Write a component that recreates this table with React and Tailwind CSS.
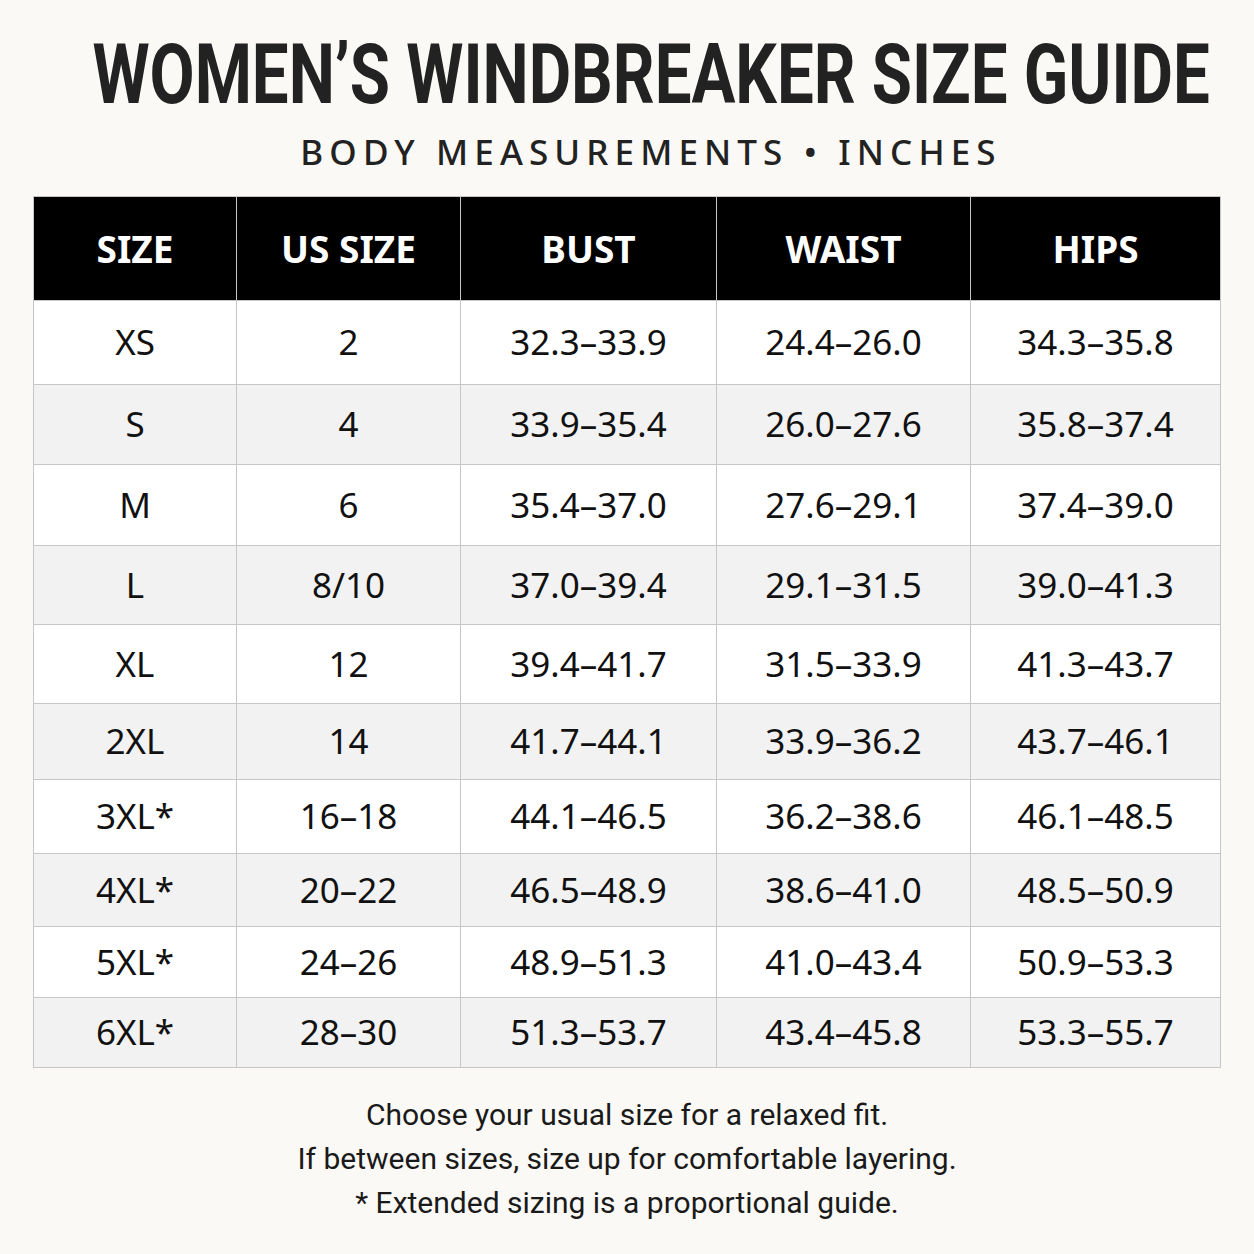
import React from "react";

const rows = [
  ["XS", "2", "32.3–33.9", "24.4–26.0", "34.3–35.8", "h-[84px]"],
  ["S", "4", "33.9–35.4", "26.0–27.6", "35.8–37.4", "h-[80px]"],
  ["M", "6", "35.4–37.0", "27.6–29.1", "37.4–39.0", "h-[81px]"],
  ["L", "8/10", "37.0–39.4", "29.1–31.5", "39.0–41.3", "h-[79px]"],
  ["XL", "12", "39.4–41.7", "31.5–33.9", "41.3–43.7", "h-[79px]"],
  ["2XL", "14", "41.7–44.1", "33.9–36.2", "43.7–46.1", "h-[76px]"],
  ["3XL*", "16–18", "44.1–46.5", "36.2–38.6", "46.1–48.5", "h-[74px]"],
  ["4XL*", "20–22", "46.5–48.9", "38.6–41.0", "48.5–50.9", "h-[73px]"],
  ["5XL*", "24–26", "48.9–51.3", "41.0–43.4", "50.9–53.3", "h-[71px]"],
  ["6XL*", "28–30", "51.3–53.7", "43.4–45.8", "53.3–55.7", "h-[70px]"],
];

const headers = ["SIZE", "US SIZE", "BUST", "WAIST", "HIPS"];

function App() {
  return (
    <div className="w-full min-h-screen bg-[#faf9f5] text-[#111] pb-10 overflow-hidden">
      <div className="pl-[48px] pt-[33px] text-center">
        <div className="flex justify-center">
          <h1 className="shrink-0 scale-x-[0.778] whitespace-nowrap font-['Roboto',sans-serif] font-bold text-[84px] leading-none text-[#222]">
            WOMEN’S WINDBREAKER SIZE GUIDE
          </h1>
        </div>
        <p className="mt-[17px] font-['Noto_Sans',sans-serif] font-medium text-[35px] leading-none tracking-[0.175em] text-[#222]">
          BODY MEASUREMENTS • INCHES
        </p>
      </div>

      <div className="mt-[27px] px-[33px]">
        <table className="w-full table-fixed border-collapse font-['Noto_Sans',sans-serif]">
          <colgroup>
            <col className="w-[203px]" />
            <col className="w-[224px]" />
            <col className="w-[256px]" />
            <col className="w-[254px]" />
            <col />
          </colgroup>
          <thead>
            <tr className="h-[104px] bg-black">
              {headers.map((h) => (
                <th
                  key={h}
                  className="border border-[#c6c6c6] text-center text-[37px] font-bold text-white"
                >
                  {h}
                </th>
              ))}
            </tr>
          </thead>
          <tbody>
            {rows.map((r, i) => (
              <tr key={r[0]} className={`${r[5]} ${i % 2 === 0 ? "bg-white" : "bg-[#f2f2f2]"}`}>
                {r.slice(0, 5).map((c, j) => (
                  <td
                    key={j}
                    className="border border-[#c6c6c6] text-center text-[35px] text-[#111]"
                  >
                    {c}
                  </td>
                ))}
              </tr>
            ))}
          </tbody>
        </table>
      </div>

      <div className="mt-[25px] text-center font-['Roboto',sans-serif] text-[30px] leading-[44px] text-[#1a1a1a]">
        <p>Choose your usual size for a relaxed fit.</p>
        <p>If between sizes, size up for comfortable layering.</p>
        <p>* Extended sizing is a proportional guide.</p>
      </div>
    </div>
  );
}

export default App;
